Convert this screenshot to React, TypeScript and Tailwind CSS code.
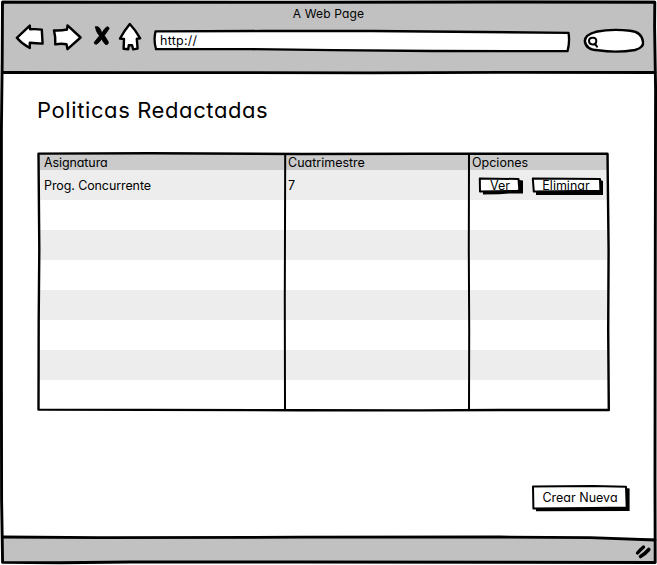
import React from "react";

type Ink = { d: string; w?: number; fill?: string };

function Sketch({ width, height, strokes, className = "" }: { width: number; height: number; strokes: Ink[]; className?: string }) {
  return (
    <svg width={width} height={height} viewBox={`0 0 ${width} ${height}`} className={`pointer-events-none overflow-visible ${className}`} aria-hidden="true">
      {strokes.map((s, i) => (
        <path key={i} d={s.d} fill={s.fill ?? "none"} stroke="#000" strokeWidth={s.w ?? 2.5} strokeLinejoin="round" strokeLinecap="round" />
      ))}
    </svg>
  );
}

const frame: Ink[] = [
  { d: "M2.5 2.2 L300 2.4 L500 2 L654.8 2.2 L654.6 27 L655.6 90 L655.2 300 L655 480 L655.2 562.5 L500 562.3 L300 562 L130 562 L60 562.8 L2.6 562.4 L1.6 500 L1.4 380 L1.4 130 L2.2 60 Z", w: 2.9 },
  { d: "M3 72.5 L150 72.6 L370 72.8 L500 72.3 L655 72.5", w: 2.8 },
  { d: "M3 537 L100 537.7 L300 537.2 L500 537 L590 537.7 L655 540", w: 2.8 },
];

const grid: Ink[] = [
  { d: "M38.5 153.6 L150 153.2 L300 154 L420 153.8 L607.5 153.8 L608.6 250 L608.2 330 L608.8 410 L500 410 L420 410.4 L300 410.2 L38.5 409.6 L38.7 320 L39.3 250 Z", w: 2.4 },
  { d: "M285.2 155 L284.8 300 L285 409", w: 2 },
  { d: "M469 155 L468.8 250 L469.2 330 L469 410", w: 2 },
];

const navIcons: Ink[] = [
  { d: "M16.8 37.8 L29.8 25.6 L30 29.3 Q36 28.8 41.8 29.6 L42.6 43.6 Q36 43.6 29.8 42.8 L29.8 48 Q22 44 16.8 37.8 Z", fill: "#fff", w: 2.4 },
  { d: "M54 30.4 Q60 31 67 29.5 L67.5 25.4 L80.6 37.5 L67.5 49.2 L66.5 44.2 Q61 43.2 55.3 44.4 Q55.7 37 54 30.4 Z", fill: "#fff", w: 2.4 },
  { d: "M95.5 27 Q97.5 25.8 99.5 28 Q100.8 29.8 101.9 33 Q104 29 106.8 26.8 Q109 26.6 109.2 28.6 Q106.9 32 104.4 35.6 Q107 39.5 108.4 42 Q108.5 45 105.6 44.6 Q103.5 42.5 101.6 39 Q99.3 42.8 96.5 44.2 Q94 44.6 94.3 42.2 Q97 38.8 99.5 35.8 Q95.5 31.5 95.5 27 Z", fill: "#000", w: 0.8 },
  { d: "M129.8 24 Q135 29.5 140.2 38.3 L136.8 38.8 L137.6 48.6 L133.2 49.4 L132 45.2 L128.8 45.2 L128.3 49.2 L123.6 48.8 L124 39 L120 38.6 Q124 31 129.8 24 Z", fill: "#fff", w: 2.4 },
];

function Label({ children, className }: { children: React.ReactNode; className: string }) {
  return <span className={`whitespace-nowrap leading-none ${className}`}>{children}</span>;
}

function SketchButton({ children, className, width, height, outline, shade }: { children: React.ReactNode; className: string; width: number; height: number; outline: string; shade: string }) {
  return (
    <button className={`relative flex items-center justify-center ${className}`}>
      <svg width={width} height={height} className="absolute top-0 left-0 overflow-visible" aria-hidden="true">
        <path d={shade} fill="#000" />
        <path d={outline} fill="#fff" stroke="#000" strokeWidth="2" strokeLinejoin="round" />
      </svg>
      <span className="relative whitespace-nowrap leading-none">{children}</span>
    </button>
  );
}

export default function App() {
  return (
    <main className="relative flex h-[565px] w-[657px] flex-col overflow-hidden bg-white font-['Inter','Liberation_Sans',sans-serif] text-[12.5px] text-black [font-feature-settings:'cv11','calt'_0]">
      <header className="mx-0.5 flex h-[73px] flex-col bg-[#c1c1c1] pt-[8px]">
        <div className="flex h-3 justify-center">
          <Label className="text-[12px] tracking-[0.15px]">A Web Page</Label>
        </div>
        <div className="flex h-[24px] items-center pt-[17px] pl-[158px]">
          <div className="relative h-[13px]">
            <Sketch
              width={503}
              height={29}
              className="absolute top-[-6px] left-[-8px]"
              strokes={[
                { d: "M3.5 3.4 L110 3 L220 3 L416.5 4.8 Q418 14 415.5 23.2 L280 23 L180 22.1 L100 21.2 L4 21.2 Q1.4 12 3.5 3.4 Z", fill: "#fff", w: 2.3 },
                { d: "M444 3.8 Q460 0.6 478 2.8 Q490 4 491 14 Q492 19.5 483 22 Q465 25 446 22.3 Q434 22 432.8 13 Q433 6.5 444 3.8 Z", fill: "#fff", w: 2.4 },
                { d: "M440.5 9.8 Q444.5 9.4 444.3 13 Q444.3 16.4 440.7 16.4 Q437.2 16.5 437 13 Q437.2 9.7 440.5 9.8 M443.2 16.2 L445 18.7", w: 2 },
              ]}
            />
            <Label className="relative block pt-px text-[12.5px] tracking-[0.25px]">http://</Label>
          </div>
        </div>
      </header>

      <section className="flex flex-1 flex-col px-[38px]">
        <h1 className="-ml-px mt-[25px] h-6 text-[22px] leading-6 font-normal tracking-[0.6px] whitespace-nowrap">Politicas Redactadas</h1>
        <table className="mt-[32px] w-[571px] table-fixed border-collapse text-left">
          <colgroup>
            <col className="w-[247px]" />
            <col className="w-[184px]" />
            <col className="w-[140px]" />
          </colgroup>
          <thead>
            <tr className="h-[16px] bg-[#cbcbcb] leading-none">
              <th className="p-0 pl-1.5 font-normal"><Label className="block pt-[3px] tracking-[-0.1px]">Asignatura</Label></th>
              <th className="p-0 pl-[3px] font-normal"><Label className="block pt-[3px]">Cuatrimestre</Label></th>
              <th className="p-0 pl-[3px] font-normal"><Label className="block pt-[3px]">Opciones</Label></th>
            </tr>
          </thead>
          <tbody>
            <tr className="h-[30px] bg-[#ededed]">
              <td className="p-0 pl-1.5"><Label className="block pt-[3px] tracking-[-0.1px]">Prog. Concurrente</Label></td>
              <td className="p-0 pl-[3px]"><Label className="block pt-[3px]">7</Label></td>
              <td className="p-0 pl-[10px]">
                <div className="flex gap-[11px]">
                  <SketchButton className="h-[15px] w-[42px] pt-0.5" width={44} height={18} outline="M0.8 0.5 L39.5 1 L40.3 11.5 L39 12.8 L1 13.4 Z" shade="M4 13 L39 12 L39.5 2 L44 2.5 L44 15.5 L30 15.5 L20 16.3 L4 16.5 Z">Ver</SketchButton>
                  <SketchButton className="h-[15px] w-[68px] pt-0.5" width={72} height={18} outline="M0.8 0.5 L68 1 L68.4 12.8 L1.8 13.6 Z" shade="M4 13 L67 12 L68 2 L71 3 L71 17 L4 17 Z">Eliminar</SketchButton>
                </div>
              </td>
            </tr>
            {[0, 1, 2, 3, 4, 5, 6].map((r) => (
              <tr key={r} className={r % 2 ? "h-[30px] bg-[#ededed]" : "h-[30px] bg-white"}>
                <td className="p-0" />
                <td className="p-0" />
                <td className="p-0" />
              </tr>
            ))}
          </tbody>
        </table>
        <div className="mt-[76px] flex justify-end">
          <SketchButton className="mr-[-8px] h-[24px] w-[94px] text-[12.5px]" width={96} height={26} outline="M0 0.5 L60 0 L93 0.8 L93.7 21.5 L60 22 L0.4 22.6 Z" shade="M3 22 L92 21 L93 2 L96.6 2.5 L96.6 25 L3 25.3 Z">Crear Nueva</SketchButton>
        </div>
      </section>

      <footer className="mx-0.5 mb-0.5 flex h-[25px] items-center justify-end bg-[#c1c1c1] pt-0.5 pr-[3px]">
        <Sketch width={18} height={16} strokes={[{ d: "M3.5 9 Q6 6 9.5 3", w: 3.4 }, { d: "M6.5 12.5 Q11 10 14.8 5.5", w: 3.6 }]} />
      </footer>

      <Sketch width={657} height={565} strokes={[...frame, ...grid, ...navIcons]} className="absolute top-0 left-0" />
    </main>
  );
}
